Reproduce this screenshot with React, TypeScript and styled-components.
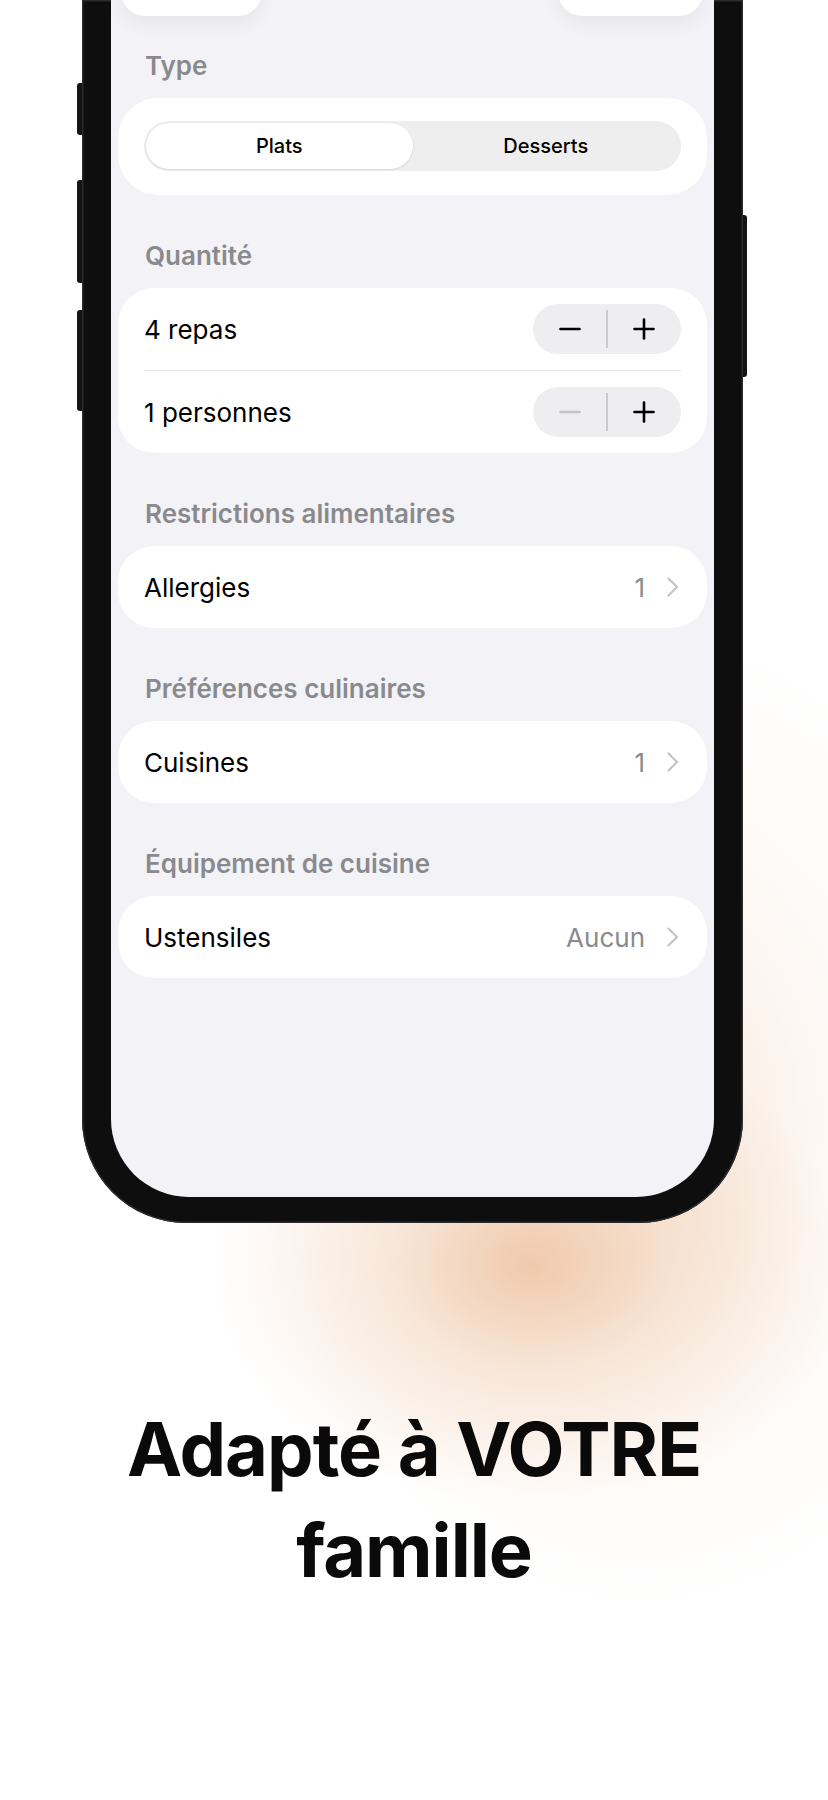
import styled, { createGlobalStyle } from 'styled-components';

const GlobalStyle = createGlobalStyle`
  html, body {
    margin: 0;
    padding: 0;
    background: #ffffff;
  }
  body {
    font-family: Inter, "Noto Sans", sans-serif;
    -webkit-font-smoothing: antialiased;
  }
`;

function Chevron() {
  return (
    <svg width="12" height="20" viewBox="0 0 12 20" fill="none">
      <polyline
        points="1.5,1.5 10,10 1.5,18.5"
        stroke="#c4c4c7"
        strokeWidth="2.2"
        strokeLinecap="round"
        strokeLinejoin="round"
      />
    </svg>
  );
}

function MinusIcon({ disabled }: { disabled?: boolean }) {
  return (
    <svg width="22" height="22" viewBox="0 0 22 22">
      <line x1="1.5" y1="11" x2="20.5" y2="11" stroke={disabled ? '#c2c2c6' : '#000'} strokeWidth="2.6" strokeLinecap="round" />
    </svg>
  );
}

function PlusIcon() {
  return (
    <svg width="22" height="22" viewBox="0 0 22 22">
      <line x1="1.5" y1="11" x2="20.5" y2="11" stroke="#000" strokeWidth="2.6" strokeLinecap="round" />
      <line x1="11" y1="1.5" x2="11" y2="20.5" stroke="#000" strokeWidth="2.6" strokeLinecap="round" />
    </svg>
  );
}

interface StepperProps {
  minusDisabled?: boolean;
}

function Stepper({ minusDisabled }: StepperProps) {
  return (
    <StepperBox>
      <StepButton>
        <MinusIcon disabled={minusDisabled} />
      </StepButton>
      <StepDivider />
      <StepButton>
        <PlusIcon />
      </StepButton>
    </StepperBox>
  );
}

interface NavRowProps {
  label: string;
  value: string;
}

function NavRow({ label, value }: NavRowProps) {
  return (
    <Row>
      <RowLabel>{label}</RowLabel>
      <RowValue>
        {value}
        <Chevron />
      </RowValue>
    </Row>
  );
}

export default function App() {
  return (
    <Stage>
      <GlobalStyle />
      <Device>
        <LeftRail>
          <SideKey $h={52} $top={0} />
          <SideKey $h={103} $top={45} />
          <SideKey $h={101} $top={27} />
        </LeftRail>
        <Frame>
          <Screen>
            <TopRow>
              <TopCard $w={141} />
              <TopCard $w={145} />
            </TopRow>

            <SectionLabel $first>Type</SectionLabel>
            <SegmentCard>
              <Segmented>
                <Segment $active>Plats</Segment>
                <Segment>Desserts</Segment>
              </Segmented>
            </SegmentCard>

            <SectionLabel>Quantité</SectionLabel>
            <Card>
              <Row>
                <RowLabel>4 repas</RowLabel>
                <Stepper />
              </Row>
              <Separator />
              <Row>
                <RowLabel>1 personnes</RowLabel>
                <Stepper minusDisabled />
              </Row>
            </Card>

            <SectionLabel>Restrictions alimentaires</SectionLabel>
            <Card>
              <NavRow label="Allergies" value="1" />
            </Card>

            <SectionLabel>Préférences culinaires</SectionLabel>
            <Card>
              <NavRow label="Cuisines" value="1" />
            </Card>

            <SectionLabel>Équipement de cuisine</SectionLabel>
            <Card>
              <NavRow label="Ustensiles" value="Aucun" />
            </Card>
          </Screen>
        </Frame>
        <RightRail>
          <SideKey $h={162} $top={0} $right />
        </RightRail>
      </Device>

      <Headline>
        Adapté à VOTRE
        <br />
        famille
      </Headline>
    </Stage>
  );
}

const Stage = styled.div`
  width: 828px;
  height: 1800px;
  overflow: hidden;
  background:
    radial-gradient(ellipse 320px 240px at 530px 1265px, rgba(238, 194, 160, 0.85) 0%, rgba(241, 208, 182, 0.45) 45%, rgba(255, 255, 255, 0) 100%),
    radial-gradient(ellipse 380px 500px at 640px 1120px, rgba(246, 222, 203, 0.75) 0%, rgba(250, 236, 225, 0.35) 50%, rgba(255, 255, 255, 0) 100%),
    #ffffff;
`;

const Device = styled.div`
  display: flex;
  align-items: flex-start;
  margin-left: 77px;
`;

const LeftRail = styled.div`
  display: flex;
  flex-direction: column;
  width: 5px;
  padding-top: 83px;
`;

const RightRail = styled.div`
  display: flex;
  flex-direction: column;
  width: 4px;
  padding-top: 215px;
`;

const SideKey = styled.div<{ $h: number; $top: number; $right?: boolean }>`
  height: ${(p) => p.$h}px;
  margin-top: ${(p) => p.$top}px;
  background: #141415;
  border-radius: ${(p) => (p.$right ? '0 3px 3px 0' : '3px 0 0 3px')};
`;

const Frame = styled.div`
  width: 661px;
  box-sizing: border-box;
  padding: 0 29px 26px;
  background: #0e0e0f;
  border-radius: 0 0 104px 104px;
  box-shadow: inset 0 0 0 1.5px #2b2b2d;
`;

const Screen = styled.div`
  height: 1197px;
  box-sizing: border-box;
  padding: 0 7px;
  background: #f2f2f7;
  border-radius: 0 0 78px 78px;
  overflow: hidden;
`;

const TopRow = styled.div`
  display: flex;
  justify-content: space-between;
  padding: 0 4px 0 3px;
  margin-top: -44px;
`;

const TopCard = styled.div<{ $w: number }>`
  width: ${(p) => p.$w}px;
  height: 60px;
  background: #ffffff;
  border-radius: 24px;
  box-shadow: 0 8px 18px rgba(0, 0, 0, 0.05);
`;

const SectionLabel = styled.div<{ $first?: boolean }>`
  margin: ${(p) => (p.$first ? 34 : 45)}px 0 16px 27px;
  height: 32px;
  line-height: 32px;
  font-size: 26px;
  font-weight: 600;
  color: #8a8a8e;
`;

const Card = styled.div`
  background: #ffffff;
  border-radius: 36px;
`;

const SegmentCard = styled(Card)`
  padding: 23px 26px 24px;
  border-radius: 40px;
`;

const Segmented = styled.div`
  display: grid;
  grid-template-columns: 1fr 1fr;
  height: 50px;
  padding: 2px;
  box-sizing: border-box;
  background: #eeeeef;
  border-radius: 25px;
`;

const Segment = styled.div<{ $active?: boolean }>`
  display: flex;
  align-items: center;
  justify-content: center;
  border-radius: 23px;
  font-size: 20px;
  font-weight: 500;
  color: #000000;
  background: ${(p) => (p.$active ? '#ffffff' : 'transparent')};
  box-shadow: ${(p) => (p.$active ? '0 1px 3px rgba(0,0,0,0.08), 0 0 0 0.5px rgba(0,0,0,0.04)' : 'none')};
`;

const Row = styled.div`
  display: flex;
  align-items: center;
  justify-content: space-between;
  height: 82px;
  padding: 0 28px 0 26px;
`;

const RowLabel = styled.span`
  font-size: 26px;
  color: #000000;
`;

const RowValue = styled.span`
  display: flex;
  align-items: center;
  gap: 22px;
  font-size: 26px;
  color: #8a8a8e;
`;

const Separator = styled.div`
  height: 1px;
  margin: 0 26px;
  background: #e3e3e8;
`;

const StepperBox = styled.div`
  display: flex;
  align-items: center;
  width: 148px;
  height: 50px;
  margin-right: -2px;
  background: #eeeef0;
  border-radius: 25px;
`;

const StepButton = styled.div`
  flex: 1;
  display: flex;
  align-items: center;
  justify-content: center;
`;

const StepDivider = styled.div`
  width: 1.5px;
  height: 38px;
  background: #c9c9ce;
`;

const Headline = styled.h1`
  margin: 176px 0 0;
  font-size: 74px;
  font-weight: 700;
  line-height: 101px;
  letter-spacing: -1px;
  text-align: center;
  color: #0a0a0a;
`;
